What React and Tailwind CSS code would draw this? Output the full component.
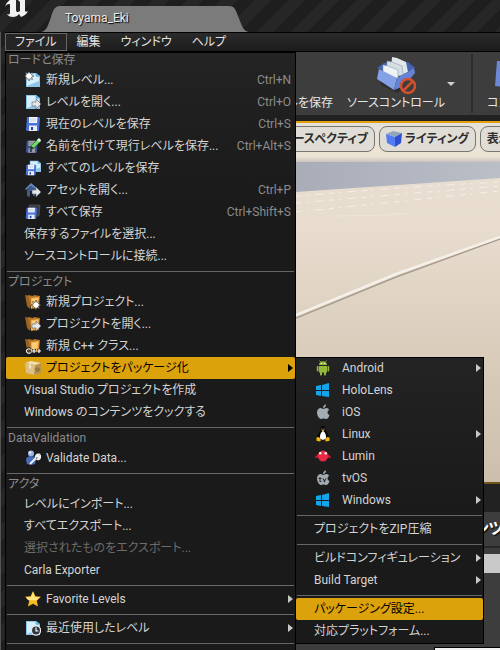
import React from 'react';

const svgProps = { width: 16, height: 16, viewBox: '0 0 16 16', 'aria-hidden': true, className: 'shrink-0' };

function Page() {
  return (
    <g>
      <path d="M1 1h10l4 3v11H1z" fill="#8fc4ea" />
      <path d="M2 2h8l1 3h3v4L2 14z" fill="#d6effb" />
      <path d="M11 1l4 3.500h-4z" fill="#5fb4dc" />
    </g>
  );
}

function Floppy() {
  return (
    <g>
      <path d="M2 1h12l1 1-1 13H2L1 14z" fill="#4a72dc" />
      <path d="M4 1h8.500l-.5 6H4z" fill="#f4f7fc" />
      <path d="M5 3h6M5 5h6" stroke="#b9c6de" strokeWidth=".8" />
      <path d="M4 9.500h8V15H4z" fill="#e6ebf6" />
      <path d="M6 11h2v3H6z" fill="#27418f" />
    </g>
  );
}

function Folder() {
  return (
    <g>
      <path d="M0 1l5 1v13l-3-3z" fill="#9a6223" />
      <path d="M3 1l5 1 1-1 6 1-1 12-8 1z" fill="#b87427" />
      <path d="M6 4l8-1-1 10-7 1.500z" fill="#f0b050" />
      <path d="M7 5l6-1-1 6-5 1z" fill="#fbcb78" />
    </g>
  );
}

function ArrowBadge() {
  return <path d="M7 8h4V5l5 5-5 5v-3H7z" fill="#e4e6e8" stroke="#5d666e" strokeWidth=".6" />;
}

const stars = 'l1 2.500 2.500-1-1 2.500 2.500 1-2.500 1 1 2.500-2.500-1-1 2.500-1-2.500-2.500 1 1-2.500-2.500-1 2.500-1-1-2.500 2.500 1z';

function Windows() {
  return <path d="M1 4l5-1v5H1zM7 3l7-2v7H7zM1 9h5v5l-5-1zM7 9h7v6l-7-1z" fill="#12a5ea" />;
}

function Apple() {
  return (
    <g fill="#a3abb3">
      <path d="M8 5c1 0 2-1 3.500-1S14 5 14 6c-2 1-2 4 .5 5-.8 2.500-2 4-3.300 4-1 0-1.600-.5-2.700-.5S7 15 6 15c-2 0-4-4-4-6.500C2 5.500 4 4 5.500 4S7.500 5 8 5z" />
      <path d="M8 4c0-2 1.500-3.500 3-3.700C11 2.500 9.800 4 8 4z" />
    </g>
  );
}

const icons = {
  newLevel: (
    <g>
      <Page />
      <path d={'M4 -1' + stars} fill="#fff" stroke="#2b3c4a" strokeWidth=".6" />
    </g>
  ),
  openLevel: (
    <g>
      <Page />
      <ArrowBadge />
    </g>
  ),
  save: <Floppy />,
  saveAs: (
    <g>
      <g transform="translate(0 2) scale(.85)" opacity=".6"><Floppy /></g>
      <path d="M5 12l1-4 7-7 3 2-7 7z" fill="#6edb68" stroke="#1c4a22" strokeWidth=".5" />
      <path d="M5 12l1-4 3 2z" fill="#2a2d30" />
      <path d="M12 2l2-2 2 2-1 2z" fill="#e9eef0" />
    </g>
  ),
  saveLevels: (
    <g>
      <g transform="translate(4 0) scale(.8)"><Page /></g>
      <g transform="translate(0 4) scale(.75)"><Floppy /></g>
    </g>
  ),
  openAsset: (
    <g>
      <path d="M0 7l6-6 6 5-1 2-5-4-5 4z" fill="#6886bd" />
      <path d="M2 8l4-4 4 3v7H8V9H5v6l-3-1z" fill="#3e5c94" />
      <ArrowBadge />
    </g>
  ),
  saveAll: (
    <g>
      <path d="M4 1h11l-1 11H6z" fill="#3a3d43" stroke="#5c6068" strokeWidth=".6" />
      <g transform="translate(0 3) scale(.8)"><Floppy /></g>
    </g>
  ),
  newProject: (
    <g>
      <Folder />
      <path d={'M11 6' + stars} fill="#fff" stroke="#3a2a14" strokeWidth=".6" />
    </g>
  ),
  openProject: (
    <g>
      <Folder />
      <ArrowBadge />
    </g>
  ),
  newClass: (
    <g>
      <Folder />
      <path d="M5.500 11.500C4 10 1.500 11 1.500 13s2.500 3 4 1.500M7 13h4M9 11v4M12 13h4M14 11v4" fill="none" stroke="#1b1b1b" strokeWidth="3" />
      <path d="M5.500 11.500C4 10 1.500 11 1.500 13s2.500 3 4 1.500M7 13h4M9 11v4M12 13h4M14 11v4" fill="none" stroke="#fff" strokeWidth="1.200" />
    </g>
  ),
  box: (
    <g>
      <path d="M0 3l6-2 10 2v10l-7 2-8-2z" fill="#b8934c" />
      <path d="M0 3l6-2 10 2-6 2z" fill="#f3dfae" />
      <path d="M0 3l10 2-1 10-8-2z" fill="#dcc086" />
      <path d="M4 4l2 .5V9L4 8.500z" fill="#f3e3b8" />
      <circle cx="12.500" cy="9.500" r="1.600" fill="none" stroke="#6b5120" strokeWidth=".9" />
    </g>
  ),
  validate: (
    <g>
      <circle cx="6" cy="3.500" r="3" fill="#9db6e6" />
      <path d="M1 10c0-3 3-4 5-4s5 1 5 4l-1 4c-2 1-6 1-8 0z" fill="#486bb8" />
      <circle cx="5" cy="2.500" r="1.200" fill="#e3ecfb" />
      <path d="M5 14l6-6M11 8c-1-2 1-4 3-3.500L12.500 6.500l1 1L15.500 6c.5 2-2 4-4 3" fill="none" stroke="#f0f1f2" strokeWidth="1.900" />
    </g>
  ),
  star: (
    <g>
      <path d="M8 0l2.400 5.200 5.600.6-4.200 3.900 1.200 5.800L8 12.700l-5 2.800 1.200-5.800L0 5.800l5.600-.6z" fill="#f6b920" />
      <path d="M8 1l2 5 5 .3-4 3.200L3 9 1 6.300 6 6z" fill="#ffe47d" />
    </g>
  ),
  recent: (
    <g>
      <Page />
      <circle cx="11" cy="10.500" r="4.600" fill="#30363d" stroke="#e5e8ea" strokeWidth="1.300" />
      <path d="M11 7.500v3.500h2.500" fill="none" stroke="#fff" strokeWidth="1.200" />
    </g>
  ),
  exit: <Folder />,
  android: (
    <g fill="#94b83c">
      <path d="M4 5c0-5 8-5 8 0zM4 6h8v6.500H4z" />
      <path d="M4.500.5l1.500 2M11.500.5L10 2.500" stroke="#94b83c" strokeWidth=".8" />
      <rect x="1.800" y="6" width="1.700" height="5.500" rx=".8" />
      <rect x="12.500" y="6" width="1.700" height="5.500" rx=".8" />
      <rect x="5" y="11" width="2" height="4.500" rx=".8" />
      <rect x="9" y="11" width="2" height="4.500" rx=".8" />
      <circle cx="6.300" cy="3.300" r=".6" fill="#fff" />
      <circle cx="9.700" cy="3.300" r=".6" fill="#fff" />
    </g>
  ),
  windows: <Windows />,
  apple: <Apple />,
  linux: (
    <g>
      <path d="M5.500 3c0-4 5-4 5 0 0 3 3.500 5 3.500 10H2C2 8 5.500 6 5.500 3z" fill="#050505" />
      <path d="M8 5c2 1 3.500 4 3 7.500L8 14l-3-1.500C4.500 9 6 6 8 5z" fill="#fff" />
      <path d="M6.500 4h3L8 6zM1.500 11.500L4 11l2 3-1 1.500-3.500-.8zM14.500 11.500L12 11l-2 3 1 1.500 3.500-.8z" fill="#f5b70f" />
      <circle cx="7" cy="3" r=".6" fill="#ddd" />
      <circle cx="9" cy="3" r=".6" fill="#ddd" />
    </g>
  ),
  lumin: (
    <g>
      <path d="M4 5L0 9v1l4-.5zM12 5l4 4v1l-4-.5z" fill="#c41c38" />
      <ellipse cx="8" cy="8" rx="5" ry="5.500" fill="#e92945" />
      <circle cx="5.300" cy="5.300" r="1.200" fill="#fff" />
      <circle cx="10.700" cy="5.300" r="1.200" fill="#fff" />
    </g>
  ),
  tvos: (
    <g>
      <Apple />
      <path d="M5 7v4.500h1.500M3.500 8.500h3M8 8.500l1.500 3 1.500-3" fill="none" stroke="#303438" strokeWidth="1.100" />
    </g>
  ),
};

function Icon({ name }) {
  return <svg {...svgProps}>{icons[name]}</svg>;
}

const fileMenu = [
  {
    heading: 'ロードと保存',
    items: [
      { icon: 'newLevel', label: '新規レベル...', keys: 'Ctrl+N' },
      { icon: 'openLevel', label: 'レベルを開く...', keys: 'Ctrl+O' },
      { icon: 'save', label: '現在のレベルを保存', keys: 'Ctrl+S' },
      { icon: 'saveAs', label: '名前を付けて現行レベルを保存...', keys: 'Ctrl+Alt+S' },
      { icon: 'saveLevels', label: 'すべてのレベルを保存' },
      { icon: 'openAsset', label: 'アセットを開く...', keys: 'Ctrl+P' },
      { icon: 'saveAll', label: 'すべて保存', keys: 'Ctrl+Shift+S' },
      { label: '保存するファイルを選択...' },
      { label: 'ソースコントロールに接続...' },
    ],
  },
  {
    heading: 'プロジェクト',
    items: [
      { icon: 'newProject', label: '新規プロジェクト...' },
      { icon: 'openProject', label: 'プロジェクトを開く...' },
      { icon: 'newClass', label: '新規 C++ クラス...' },
      { icon: 'box', label: 'プロジェクトをパッケージ化', more: true, active: true },
      { label: 'Visual Studio プロジェクトを作成' },
      { label: 'Windows のコンテンツをクックする' },
    ],
  },
  { heading: 'DataValidation', items: [{ icon: 'validate', label: 'Validate Data...' }] },
  {
    heading: 'アクタ',
    items: [
      { label: 'レベルにインポート...' },
      { label: 'すべてエクスポート...' },
      { label: '選択されたものをエクスポート...', disabled: true },
      { label: 'Carla Exporter' },
    ],
  },
  { items: [{ icon: 'star', label: 'Favorite Levels', more: true }] },
  { items: [{ icon: 'recent', label: '最近使用したレベル', more: true }] },
  { items: [{ icon: 'exit', label: '終了' }] },
];

const packageMenu = [
  {
    items: [
      { icon: 'android', label: 'Android', more: true },
      { icon: 'windows', label: 'HoloLens' },
      { icon: 'apple', label: 'iOS' },
      { icon: 'linux', label: 'Linux', more: true },
      { icon: 'lumin', label: 'Lumin' },
      { icon: 'tvos', label: 'tvOS' },
      { icon: 'windows', label: 'Windows', more: true },
    ],
  },
  { items: [{ label: 'プロジェクトをZIP圧縮' }] },
  {
    items: [
      { label: 'ビルドコンフィギュレーション', more: true },
      { label: 'Build Target', more: true },
    ],
  },
  {
    items: [
      { label: 'パッケージング設定...', active: true },
      { label: '対応プラットフォーム...' },
    ],
  },
];

function MenuItem({ item, wide }) {
  const tone = item.active
    ? 'bg-[#dca20c] text-black rounded-xs'
    : item.disabled
      ? 'text-[#6c6c6c]'
      : 'text-[#d4d4d4]';
  return (
    <button
      type="button"
      role="menuitem"
      disabled={item.disabled}
      className={`flex h-[22px] w-full items-center whitespace-nowrap pr-1 text-left ${item.icon ? 'pl-[19px]' : 'pl-[18px]'} ${tone}`}
    >
      {item.icon && <Icon name={item.icon} />}
      <span className={item.icon ? (wide ? 'ml-[11px]' : 'ml-[5px]') : ''}>{item.label}</span>
      {item.keys && <span className="ml-auto text-[#8c8c8c]">{item.keys}</span>}
      {item.more && (
        <svg width="5" height="8" viewBox="0 0 5 8" aria-hidden="true" className="-mr-0.5 ml-auto shrink-0">
          <path d="M0 0l5 4-5 4z" fill={item.active ? '#000' : '#c8c8c8'} />
        </svg>
      )}
    </button>
  );
}

function Menu({ sections, label, wide, className }) {
  return (
    <div
      role="menu"
      aria-label={label}
      className={`absolute bg-linear-to-b from-[#232323] to-[#1a1a1a] to-[150px] px-px pb-0.5 outline -outline-offset-1 outline-black ${className}`}
    >
      {sections.map((section, i) => (
        <React.Fragment key={i}>
          {i > 0 && <hr className="mx-px mt-1 mb-0.5 border-[#666]" />}
          {section.heading && <h2 className="h-[17px] px-0.5 leading-[17px] text-[#8c8c8c]">{section.heading}</h2>}
          {section.items.map((item) => (
            <MenuItem key={item.label} item={item} wide={wide} />
          ))}
        </React.Fragment>
      ))}
    </div>
  );
}

function TitleBar() {
  return (
    <header className="flex h-8 shrink-0 items-end bg-[repeating-linear-gradient(135deg,#1e1e1e_0_12px,#262626_12px_24px)]">
      <svg width="24" height="32" viewBox="0 0 24 32" role="img" aria-label="Unreal Engine" className="ml-[5px] shrink-0">
        <path d="M0 7C1 3 4 0 8 -2h3v12c0 2 2 3 4 1V2c0-1-1-1-2-1l3-3h6c-2 1-2 2-2 4v8c0 2 1 2 3 1-1 3-4 5-7 6l-2-3c-1 2-4 3-6 3-3 0-5-1-6-3 2 1 3 0 3-1V4C2 4 1 5 0 7z" fill="#f2f2f2" />
      </svg>
      <div className="ml-3 grid h-[26px] w-[208px] shrink-0 grid-cols-1 grid-rows-1">
        <svg viewBox="0 0 208 26" preserveAspectRatio="none" aria-hidden="true" className="col-start-1 row-start-1 h-full w-full">
          <path d="M0 26C6 25 7 19 10 11 12 5 13 0 19 0h169c6 0 7 5 9 10 4 10 5 15 11 16z" fill="#7b7b7b" />
        </svg>
        <span className="col-start-1 row-start-1 pl-6 leading-6 text-[#ececec] [text-shadow:1px_1px_1px_#000]">Toyama_Eki</span>
      </div>
    </header>
  );
}

function MenuBar() {
  return (
    <nav aria-label="メイン" className="flex h-5 shrink-0 border-y border-black bg-linear-to-b from-[#2b2b2b] to-[#1c1c1c] pl-[5px] text-[#e2e2e2]">
      {['ファイル', '編集', 'ウィンドウ', 'ヘルプ'].map((name, i) => (
        <button
          key={name}
          type="button"
          className={`flex items-center px-2.5 ${i === 0 ? 'bg-[#252525] outline -outline-offset-1 outline-[#666]' : ''}`}
        >
          {name}
        </button>
      ))}
    </nav>
  );
}

function ToolBar() {
  const tool = 'flex shrink-0 flex-col justify-end whitespace-nowrap pb-1';
  return (
    <div className="flex h-[63px] shrink-0 bg-[#3d3d3d] pl-[262px] text-[#e6e6e6] [text-shadow:1px_1px_1px_#000]">
      <button type="button" className={`${tool} w-[71px] items-end`}>レベルを保存</button>
      <button type="button" className={`${tool} w-[126px] items-center`}>
        <svg width="42" height="40" viewBox="0 0 42 40" aria-hidden="true">
          <path d="M4 18l15-10 20 8-16 22L6 30z" fill="#1b1b1b" opacity=".45" />
          <path d="M2 13l7-5 24-1 7 6-18 8z" fill="#4463b4" />
          <path d="M17 2l5 1 9 4 2 10-9 4-8-6z" fill="#dfe7ea" />
          <path d="M12 6l5 1 10 4 1 9-9 2-7-7z" fill="#d3dde2" stroke="#8fa0b0" strokeWidth=".6" />
          <path d="M8 10l5 1 10 4v8l-8 1-7-7z" fill="#eef3f4" stroke="#8fa0b0" strokeWidth=".6" />
          <path d="M4 14l18 9-3 12L2 24z" fill="#84a0e6" />
          <path d="M22 23l17-10 1 5-11 13-10 4z" fill="#6583d4" />
          <circle cx="33" cy="31" r="7" fill="#3d3d3d" stroke="#d5502d" strokeWidth="2.500" />
          <path d="M28 36l10-10" stroke="#d5502d" strokeWidth="2.500" />
        </svg>
        <span>ソースコントロール</span>
      </button>
      <span className="-ml-3 w-6 shrink-0 pt-[30px]">
        <svg width="8" height="4" viewBox="0 0 8 4" aria-hidden="true" className="block">
          <path d="M0 0h8L4 4z" fill="#d0d0d0" />
        </svg>
      </span>
      <span className="my-0.5 w-0.5 shrink-0 bg-[#2c2c2c]" />
      <button type="button" className={`${tool} ml-3.5 w-24 items-start`}>
        <svg width="22" height="38" viewBox="0 0 22 38" aria-hidden="true" className="ml-2">
          <path d="M2 4h20v27L0 29z" fill="#6d88d6" />
        </svg>
        <span>コンテンツ</span>
      </button>
    </div>
  );
}

function Viewport() {
  const pill = 'flex h-[26px] shrink-0 items-center whitespace-nowrap rounded-lg border border-[#77776f] bg-[#dfddd6] font-bold text-[#2d2d2d]';
  return (
    <main className="grid h-[363px] shrink-0 grid-cols-1 grid-rows-1 border-y-2 border-[#e0a010] border-b-[#6d551d]">
      <svg viewBox="0 0 204 359" preserveAspectRatio="none" aria-hidden="true" className="col-start-1 row-start-1 h-[359px] w-[calc(100%-296px)] justify-self-end">
        <defs>
          <linearGradient id="sand" x1="0" y1="0" x2="0" y2="1">
            <stop offset="0" stopColor="#e9dfd3" />
            <stop offset=".3" stopColor="#e7dcce" />
            <stop offset=".65" stopColor="#d9ccbb" />
            <stop offset="1" stopColor="#cdbfac" />
          </linearGradient>
          <linearGradient id="haze" x1="0" y1="0" x2="0" y2="1">
            <stop offset="0" stopColor="#e4e0da" />
            <stop offset=".85" stopColor="#eee4d5" />
            <stop offset="1" stopColor="#c9c4c0" />
          </linearGradient>
          <linearGradient id="sky" x1="0" y1="0" x2="1" y2="0">
            <stop offset="0" stopColor="#a9adb8" />
            <stop offset="1" stopColor="#b9bec7" />
          </linearGradient>
        </defs>
        <rect width="204" height="359" fill="url(#sand)" />
        <rect width="204" height="39" fill="url(#haze)" />
        <path d="M0 39h204v16L0 69z" fill="url(#sky)" />
        <path d="M0 73l100-8 104-6M0 80l60-5 144-12M0 89l50-5 154-16" fill="none" stroke="#f8f4ec" strokeWidth="1" strokeDasharray="5 5 2 7 8 6" opacity=".8" />
        <path d="M40 93l60-1M90 91h20" stroke="#f3ece1" strokeWidth="1" opacity=".6" />
        <path d="M0 195L100 154 204 116" fill="none" stroke="#a99d8f" strokeWidth="1.500" />
        <path d="M0 192L100 151 204 114" fill="none" stroke="#f5f1e9" strokeWidth="2.500" />
      </svg>
      <div className="col-start-1 row-start-1 flex items-start gap-1 overflow-hidden pt-[3px] pl-[270px]">
        <button type="button" className={`${pill} w-[105px] justify-end pr-1.5`}>パースペクティブ</button>
        <button type="button" className={`${pill} gap-[3px] px-1.5`}>
          <svg width="16" height="16" viewBox="0 0 16 16" aria-hidden="true">
            <path d="M0 3l7-3 9 2-7 4z" fill="#91a7bb" />
            <path d="M0 3l9 3v10L1 12z" fill="#527cf0" />
            <path d="M9 6l7-4-1 10-6 4z" fill="#2f4ed0" />
          </svg>
          ライティング
        </button>
        <button type="button" className={`${pill} px-1.5`}>表示</button>
      </div>
    </main>
  );
}

function ContentBrowser() {
  return (
    <section className="flex flex-1 flex-col bg-[#3d3d3d]">
      <div className="h-7 bg-[#222]" />
      <div className="flex h-9 items-center justify-end overflow-hidden border-b-2 border-[#262626] text-base font-bold text-white [text-shadow:1px_1px_1px_#000]">
        <h2 className="-mr-1">コンテンツ</h2>
      </div>
      <div className="mt-1.5 h-[19px] bg-[#c9c9c9]" />
      <div className="mt-auto ml-[434px] h-[3px] border-t border-l border-black bg-[#f2f2f2]" />
    </section>
  );
}

export default function App() {
  return (
    <div className="relative flex h-screen flex-col overflow-hidden bg-[#1e1e1e] font-['Roboto','Noto_Sans_CJK_JP',sans-serif] text-xs [font-feature-settings:'palt']">
      <TitleBar />
      <MenuBar />
      <ToolBar />
      <div className="h-1.5 shrink-0 bg-[#222]" />
      <Viewport />
      <ContentBrowser />
      <div className="absolute top-8 bottom-0 left-0 w-[5px] border-l border-[#555] bg-[repeating-linear-gradient(135deg,#1e1e1e_0_12px,#262626_12px_24px)]" />
      <Menu sections={fileMenu} label="ファイル" className="top-[52px] left-[5px] w-[291px]" />
      <Menu sections={packageMenu} label="プロジェクトをパッケージ化" wide className="top-[357px] left-[295px] w-[189px]" />
    </div>
  );
}
